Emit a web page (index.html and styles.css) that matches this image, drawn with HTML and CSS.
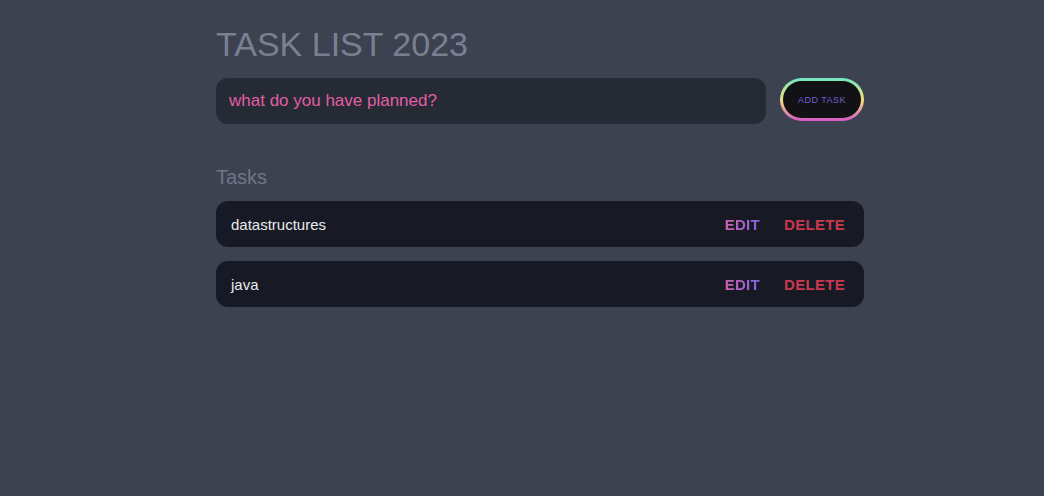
FILE: index.html
```html
<!DOCTYPE html>
<html>
<head>
<meta charset="utf-8">
<link rel="stylesheet" href="styles.css">
</head>
<body>
<main class="app">
  <h1 class="title">TASK LIST 2023</h1>
  <form class="new-task">
    <input class="new-task-input" type="text" placeholder="what do you have planned?">
    <button class="add-btn" type="button"><span class="add-inner">ADD TASK</span></button>
  </form>
  <h2 class="tasks-heading">Tasks</h2>
  <div class="task-list">
    <div class="task">
      <span class="task-text">datastructures</span>
      <div class="actions">
        <button class="edit" type="button">EDIT</button>
        <button class="delete" type="button">DELETE</button>
      </div>
    </div>
    <div class="task">
      <span class="task-text">java</span>
      <div class="actions">
        <button class="edit" type="button">EDIT</button>
        <button class="delete" type="button">DELETE</button>
      </div>
    </div>
  </div>
</main>
</body>
</html>
```
FILE: styles.css
```css
* { box-sizing: border-box; }
html, body { margin: 0; height: 100%; }
body {
  background: #3d4250;
  font-family: "Liberation Sans", Arial, sans-serif;
  padding-left: 36px;
}
.app {
  width: 648px;
  margin: 0 auto;
  padding-top: 25px;
}
.title {
  margin: 0;
  font-size: 34px;
  font-weight: 400;
  color: #7a8092;
  line-height: 38px;
}
.new-task {
  display: flex;
  align-items: flex-start;
  gap: 14px;
  margin-top: 15px;
}
.new-task-input {
  flex: 1;
  height: 46px;
  border: none;
  outline: none;
  border-radius: 12px;
  background: #262a35;
  padding: 0 13px;
  font-family: inherit;
  font-size: 17px;
  color: #e6e6e6;
}
.new-task-input::placeholder { color: #e05fa6; }
.add-btn {
  width: 84px;
  height: 43px;
  border: none;
  padding: 3px;
  border-radius: 22px;
  background: linear-gradient(to bottom, #6ee7c0 0%, #f3e27a 50%, #d658c8 100%);
  cursor: pointer;
}
.add-inner {
  display: flex;
  align-items: center;
  justify-content: center;
  height: 100%;
  border-radius: 19px;
  background: #121214;
  color: #6f5fd6;
  font-family: inherit;
  font-size: 9px;
  letter-spacing: 0.5px;
}
.tasks-heading {
  margin: 42px 0 0;
  font-size: 20px;
  font-weight: 400;
  color: #6f7587;
  line-height: 22px;
}
.task-list {
  display: flex;
  flex-direction: column;
  gap: 14px;
  margin-top: 13px;
}
.task {
  display: flex;
  align-items: center;
  height: 46px;
  background: #171a25;
  border-radius: 12px;
  padding: 0 19px 0 15px;
}
.task-text {
  flex: 1;
  color: #eaeaea;
  font-size: 15px;
}
.actions {
  display: flex;
  gap: 24px;
}
.actions button {
  border: none;
  background: none;
  padding: 0;
  font-family: inherit;
  font-size: 15px;
  font-weight: 700;
  letter-spacing: 0.3px;
  cursor: pointer;
}
.edit {
  background: linear-gradient(to right, #d45fb0, #7e63e0) !important;
  -webkit-background-clip: text !important;
  background-clip: text !important;
  color: transparent;
}
.delete {
  color: #c8384e;
}
```
